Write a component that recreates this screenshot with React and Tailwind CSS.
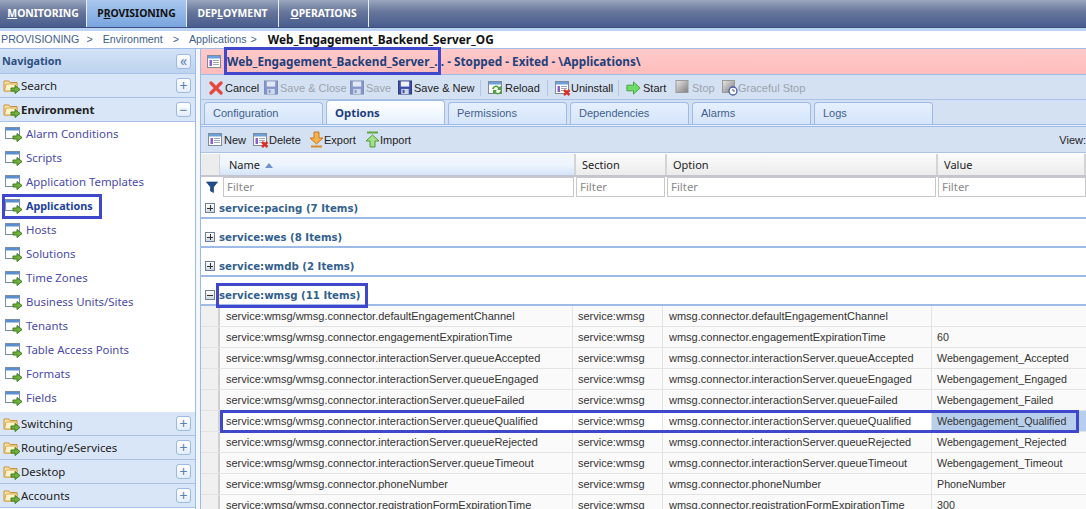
const FONT = "font-['Noto_Sans',sans-serif]";
const ARIAL = "font-['Liberation_Sans',sans-serif]";
const Fld = () => (
  <svg width="18" height="18" viewBox="0 0 18 18" className="shrink-0">
    <path d="M1 4h5l1 1.500h7V14H1z" fill="#fbe7a8" stroke="#c98f3c" />
    <path d="M3 7h11v7H1.500z" fill="#fdf3c9" stroke="#d6a350" />
    <path d="M8 11h4V8.500l5 4-5 4V14H8z" fill="#6fb03c" stroke="#3f7d1f" />
  </svg>
);
const Win = () => (
  <svg width="18" height="18" viewBox="0 0 18 18" className="shrink-0">
    <rect x="0.500" y="2.500" width="14" height="11" fill="#fff" stroke="#7a8ca8" />
    <rect x="1" y="3" width="13" height="2.500" fill="#5b8fd0" />
    <path d="M8 11h4V8.500l5 4-5 4V14H8z" fill="#6fb03c" stroke="#3f7d1f" />
  </svg>
);
const Doc = ({ x }) => (
  <svg width="16" height="16" viewBox="0 0 16 16" className="shrink-0">
    <rect x="0.500" y="1.500" width="13" height="12" fill="#fff" stroke="#7f8a99" />
    <rect x="1" y="2" width="12" height="2.500" fill="#6aa0dc" />
    <rect x="2.500" y="6" width="2.500" height="6" fill="#8a5fd0" />
    <path d="M6 6.500h6M6 8.500h6M6 10.500h6" stroke="#9aa7b8" />
    {x && <path d="M9 10l5.500 5M14.500 10L9 15" stroke="#d8302a" strokeWidth="2.400" />}
  </svg>
);
const Disk = ({ off }) => (
  <svg width="14" height="15" viewBox="0 0 15 15" className="shrink-0" opacity={off ? 0.5 : 1}>
    <rect x="0.500" y="0.500" width="14" height="14" fill="#3a4ea8" stroke="#27357a" />
    <rect x="3" y="1" width="9" height="5.500" fill="#eef2fa" />
    <rect x="3.500" y="9" width="8" height="5.500" fill="#cfd6e4" />
    <rect x="5" y="10" width="2" height="3.500" fill="#3a4ea8" />
  </svg>
);
const Cross = () => (
  <svg width="14" height="14" viewBox="0 0 14 14" className="shrink-0">
    <path d="M2 2l10 10M12 2L2 12" stroke="#e8453c" strokeWidth="3.200" strokeLinecap="round" />
  </svg>
);
const Reload = () => (
  <svg width="16" height="16" viewBox="0 0 16 16" className="shrink-0">
    <rect x="0.500" y="1.500" width="13" height="12" fill="#fff" stroke="#7f8a99" />
    <rect x="1" y="2" width="12" height="2.500" fill="#6aa0dc" />
    <path d="M4 9a4 4 0 0 1 7-2l2-1v4h-4l1-1a2 2 0 0 0-4 0z" fill="#4da23a" />
    <path d="M14 10a4 4 0 0 1-7 3l-2 1v-4h4l-1 1a2 2 0 0 0 4 0z" fill="#4da23a" />
  </svg>
);
const Right = () => (
  <svg width="15" height="14" viewBox="0 0 16 14" className="shrink-0">
    <path d="M1 4h7V0.500L15 7l-7 6.500V10H1z" fill="#6fdc6a" stroke="#3fa33c" />
  </svg>
);
const StopI = ({ clock }) => (
  <svg width={clock ? 17 : 14} height="17" viewBox={clock ? "0 0 17 17" : "0.500 0 14 17"} className="shrink-0">
    <defs>
      <linearGradient id="sg" x1="0" y1="0" x2="1" y2="1">
        <stop offset="0" stopColor="#e8e8e8" />
        <stop offset="1" stopColor="#7d7d7d" />
      </linearGradient>
    </defs>
    <rect x="1.500" y="1.500" width="12" height="12" fill="url(#sg)" stroke="#9a9a9a" />
    {clock && <circle cx="12" cy="12" r="4" fill="#fff" stroke="#4a5aa8" strokeWidth="1.300" />}
    {clock && <path d="M12 10v2h2" stroke="#4a5aa8" fill="none" />}
  </svg>
);
const ExportI = () => (
  <svg width="15" height="17" viewBox="0 0 15 17" className="shrink-0">
    <path d="M5 1h5v6h4l-6.500 6L1 7h4z" fill="#f6b24a" stroke="#c9761e" />
    <path d="M2 15.500h11" stroke="#d98a2c" strokeWidth="2" />
  </svg>
);
const ImportI = () => (
  <svg width="15" height="17" viewBox="0 0 15 17" className="shrink-0">
    <path d="M2 1.500h11" stroke="#5aa83c" strokeWidth="2" />
    <path d="M5 16h5v-6h4L7.500 4 1 10h4z" fill="#a4e08a" stroke="#4f9a34" />
  </svg>
);
const Funnel = () => (
  <svg width="12" height="12" viewBox="0 0 12 12">
    <path d="M0.500 1h11L7.500 6v5.500l-3-1.500V6z" fill="#1f4f8f" stroke="#0d2f5f" strokeWidth="0.600" />
  </svg>
);

const PM = ({ c }) => (
  <div className="w-[15px] h-[15px] rounded-[3px] border border-[#9db9e0] bg-gradient-to-b from-white to-[#e3edfb] flex items-center justify-center text-[#5a7fb5] text-[14px] leading-none">
    {c}
  </div>
);

const Section = ({ label, bold, sign }) => (
  <div className="h-[24px] shrink-0 flex items-center justify-between pl-[3px] pr-[4px] bg-[#d9e6f7] border-b border-[#a9c3e6] text-[#222] text-[11.400px]">
    <div className="flex items-center">
      <Fld />
      <span className={bold ? "font-bold" : ""}>{label}</span>
    </div>
    <PM c={sign} />
  </div>
);

const navItems = ["Alarm Conditions", "Scripts", "Application Templates", "Applications", "Hosts", "Solutions", "Time Zones", "Business Units/Sites", "Tenants", "Table Access Points", "Formats", "Fields"];

const rows = [
  ["defaultEngagementChannel", ""],
  ["engagementExpirationTime", "60"],
  ["interactionServer.queueAccepted", "Webengagement_Accepted"],
  ["interactionServer.queueEngaged", "Webengagement_Engaged"],
  ["interactionServer.queueFailed", "Webengagement_Failed"],
  ["interactionServer.queueQualified", "Webengagement_Qualified"],
  ["interactionServer.queueRejected", "Webengagement_Rejected"],
  ["interactionServer.queueTimeout", "Webengagement_Timeout"],
  ["phoneNumber", "PhoneNumber"],
  ["registrationFormExpirationTime", "300"],
];

const Top = ({ w, pre, u, post, active }) => (
  <div className={`h-full flex items-center justify-center border-r border-[#e8eef8] font-bold text-[10.400px] ${active ? "bg-gradient-to-b from-[#a9c8ef] to-[#78a4de] text-[#111]" : "bg-gradient-to-b from-[#9aa6bf] via-[#66759a] via-45% to-[#485c8e] text-white"} ${w}`}>
    <span>{pre}<u>{u}</u>{post}</span>
  </div>
);

const Tool = ({ icon, label, off, cls, gap }) => (
  <div className={`flex items-center text-[11px] ${ARIAL} ${off ? "text-[#9aa3ae]" : "text-[#222]"} ${gap || "gap-[2px]"} ${cls || ""}`}>
    {icon}
    <span className="pt-[1px]">{label}</span>
  </div>
);
const Sep = () => <div className="w-px h-[16px] bg-[#b4c8e4] mr-[7px]" />;

const Tab = ({ label, active }) => (
  <div className={`w-[119px] rounded-t-[4px] border border-b-0 border-[#9dbbe6] flex items-center pl-[8px] ${active ? `h-[24px] text-[11.400px] bg-gradient-to-b from-white to-[#e6f0fd] font-bold text-[#1c3f7c]` : `h-[22px] text-[11px] ${ARIAL} bg-gradient-to-b from-[#e6f0fd] to-[#d5e5fb] text-[#3f5f8c]`}`}>
    {label}
  </div>
);

const HeadCell = ({ w, label, active, arrow }) => (
  <div className={`h-full pt-[1px] flex items-center border-r-2 border-[#d4d4d4] text-[#222] text-[11px] gap-[5px] ${w} ${active ? "pl-[9px] bg-gradient-to-b from-[#f2f7fe] via-[#eef5fd] to-[#d4e4f8]" : "pl-[6px] bg-gradient-to-b from-[#fbfbfb] to-[#ececec]"}`}>
    {label}
    {arrow && <span className="w-0 h-0 border-x-[4px] border-x-transparent border-b-[5px] border-b-[#6f93c8]" />}
  </div>
);

const FilterCell = ({ w, last }) => (
  <div className={`h-full ${last ? "" : "pr-[2px]"} ${w}`}>
    <div className="h-full border border-[#c9c9c9] bg-white text-[#8a8a8a] text-[11.400px] pl-[3px] flex items-center">Filter</div>
  </div>
);

const Group = ({ label, open, first }) => (
  <div className={`${first ? "h-[22px]" : "h-[29px]"} shrink-0 border-b-2 border-[#9dbbe6] bg-white flex items-end pl-[4px] gap-[4px] box-border`}>
    <div className="w-[10px] h-[10px] mb-[4px] border border-[#6f7f94] bg-gradient-to-b from-white to-[#cfd8e4] flex items-center justify-center">
      <div className="relative w-[6px] h-px bg-[#333]">
        {!open && <div className="absolute left-[2.500px] -top-[2.500px] w-px h-[6px] bg-[#333]" />}
      </div>
    </div>
    <span className="font-bold text-[#335f8e] text-[10.200px] font-['DejaVu_Sans',sans-serif] mb-[1px]">{label}</span>
  </div>
);

const Box = ({ cls }) => <div className={`absolute border-[3px] border-[#3f48cc] pointer-events-none ${cls}`} />;

export default function App() {
  return (
    <div className={`relative w-[1086px] h-[509px] overflow-hidden bg-white flex flex-col ${FONT}`}>
      <div className="h-[28px] shrink-0 flex bg-gradient-to-b from-[#9aa6bf] via-[#66759a] via-45% to-[#485c8e] border-b border-[#3c4f80]">
        <Top w="w-[87px]" u="M" post="ONITORING" />
        <Top w="w-[100px]" pre="P" u="R" post="OVISIONING" active />
        <Top w="w-[92px]" pre="DEP" u="L" post="OYMENT" />
        <Top w="w-[90px]" u="O" post="PERATIONS" />
      </div>
      <div className="h-[3px] shrink-0 bg-[#bcd4f3]" />
      <div className={`h-[18px] shrink-0 flex items-center pl-[1px] text-[10.700px] ${ARIAL} text-[#3f5f8c] border-b border-[#a0bde8] whitespace-pre`}>
        <span>PROVISIONING</span>
        <span className="ml-[7px] mr-[10px]">&gt;</span>
        <span>Environment</span>
        <span className="ml-[10px] mr-[10px]">&gt;</span>
        <span>Applications</span>
        <span className="ml-[4px] mr-[11px]">&gt;</span>
        <span className={`font-bold text-[#111] text-[11.800px] ${FONT}`}>Web_Engagement_Backend_Server_OG</span>
      </div>
      <div className="flex-1 flex min-h-0">
        <div className="w-[196px] shrink-0 border-r border-[#9dbbe6] flex flex-col overflow-hidden">
          <div className="h-[25px] shrink-0 flex items-center justify-between pl-[2px] pr-[4px] bg-gradient-to-b from-[#d3e2f6] to-[#bdd3ef] border-b border-[#a9c3e6]">
            <span className="font-bold text-[10.800px] text-[#2b4f80]">Navigation</span>
            <PM c="«" />
          </div>
          <Section label="Search" sign="+" />
          <Section label="Environment" bold sign="−" />
          <div className="flex-1 flex flex-col">
            {navItems.map((n) => (
              <div key={n} className={`h-[24px] shrink-0 flex items-center pl-[5px] gap-[3px] ${n === "Applications" ? "text-[10.800px] font-bold text-[#1c3f9c]" : "text-[11.400px] text-[#4a4aa8]"}`}>
                <Win />
                <span>{n}</span>
              </div>
            ))}
          </div>
          <Section label="Switching" sign="+" />
          <Section label="Routing/eServices" sign="+" />
          <Section label="Desktop" sign="+" />
          <Section label="Accounts" sign="+" />
          <div className="h-[1px] shrink-0" />
        </div>
        <div className="w-[4px] shrink-0 bg-[#f4f7fc]" />
        <div className="flex-1 flex flex-col min-w-0 border-l border-[#9dbbe6] bg-white">
          <div className="h-[26px] shrink-0 flex items-center pl-[6px] gap-[4px] bg-gradient-to-b from-[#ffc9c9] to-[#ffbcbc] border-b border-[#9dbbe6] font-bold text-[11.750px] text-[#20407c] whitespace-pre">
            <Doc />
            <span>Web_Engagement_Backend_Server_... - Stopped - Exited - \Applications\</span>
          </div>
          <div className="h-[25px] shrink-0 flex items-center pl-[8px] pt-[1px] bg-[#d4e1f2] border-b border-[#a9c3e6]">
            <Tool icon={<Cross />} label="Cancel" cls="w-[55px]" />
            <Tool icon={<Disk off />} label="Save & Close" off cls="w-[86px]" />
            <Tool icon={<Disk off />} label="Save" off cls="w-[48px]" />
            <Tool icon={<Disk />} label="Save & New" cls="w-[82px]" />
            <Sep />
            <Tool icon={<Reload />} label="Reload" gap="gap-[1px]" cls="w-[59px]" />
            <Sep />
            <Tool icon={<Doc x />} label="Uninstall" gap="gap-[0px]" cls="w-[63px]" />
            <Sep />
            <Tool icon={<Right />} label="Start" gap="gap-[2px]" cls="w-[49px]" />
            <Tool icon={<StopI />} label="Stop" off gap="gap-[3px]" cls="w-[46px]" />
            <Tool icon={<StopI clock />} label="Graceful Stop" off gap="gap-[0px]" />
          </div>
          <div className="h-[24px] shrink-0 flex items-end gap-[3px] pl-[3px] bg-[#d4e1f2]">
            <Tab label="Configuration" />
            <Tab label="Options" active />
            <Tab label="Permissions" />
            <Tab label="Dependencies" />
            <Tab label="Alarms" />
            <Tab label="Logs" />
          </div>
          <div className="h-[3px] shrink-0 bg-[#e6f0fd] border-y border-[#9dbbe6]" />
          <div className="h-[26px] shrink-0 flex items-center pl-[7px] justify-between bg-[#d4e1f2] border-b border-[#a9c3e6]">
            <div className="flex items-center">
              <Tool icon={<Doc />} label="New" gap="gap-[0px]" cls="w-[45px]" />
              <Tool icon={<Doc x />} label="Delete" gap="gap-[0px]" cls="w-[56px]" />
              <Tool icon={<ExportI />} label="Export" gap="gap-[0px]" cls="w-[56px]" />
              <Tool icon={<ImportI />} label="Import" gap="gap-[0px]" />
            </div>
            <span className={`text-[11px] pt-[1px] ${ARIAL} text-[#222]`}>View:</span>
          </div>
          <div className="h-[1px] shrink-0" />
          <div className="h-[23px] shrink-0 flex border-b-2 border-[#c5c5d2]">
            <div className="w-[19px] shrink-0 bg-[#ececec] border-r border-[#d4d4d4]" />
            <HeadCell w="w-[356px]" label="Name" active arrow />
            <HeadCell w="w-[91px]" label="Section" />
            <HeadCell w="w-[271px]" label="Option" />
            <HeadCell w="flex-1" label="Value" />
          </div>
          <div className="h-[20px] shrink-0 flex items-center">
            <div className="w-[22px] shrink-0 flex justify-center">
              <Funnel />
            </div>
            <FilterCell w="w-[353px]" />
            <FilterCell w="w-[91px]" />
            <FilterCell w="w-[271px]" />
            <FilterCell w="flex-1" last />
          </div>
          <Group label="service:pacing (7 Items)" first />
          <Group label="service:wes (8 Items)" />
          <Group label="service:wmdb (2 Items)" />
          <Group label="service:wmsg (11 Items)" open />
          <div className={`flex flex-col ${ARIAL} text-[11px] text-[#333]`}>
            {rows.map(([k, v]) => {
              const sel = k.endsWith("Qualified");
              return (
                <div key={k} className={`h-[21px] shrink-0 flex items-center border-b border-[#e3e3e3] ${sel ? "bg-white" : "bg-[#fafafa]"}`}>
                  <div className="w-[19px] h-full shrink-0 bg-[#f0f0f0] border-r-2 border-[#d0d0d0]" />
                  <div className="w-[353px] shrink-0 pl-[6px] h-full flex items-center border-r border-[#e3e3e3] whitespace-nowrap">service:wmsg/wmsg.connector.{k}</div>
                  <div className="w-[90px] shrink-0 pl-[5px] h-full flex items-center border-r border-[#e3e3e3]">service:wmsg</div>
                  <div className="w-[269px] shrink-0 pl-[6px] h-full flex items-center border-r border-[#e3e3e3] whitespace-nowrap">wmsg.connector.{k}</div>
                  <div className={`flex-1 pl-[5px] h-full flex items-center text-[10.700px] ${sel ? "bg-[#b8cfeb]" : ""}`}>{v}</div>
                </div>
              );
            })}
          </div>
        </div>
      </div>
      <Box cls="left-[2px] top-[194px] w-[100px] h-[25px]" />
      <Box cls="left-[224px] top-[47px] w-[217px] h-[28px]" />
      <Box cls="left-[216px] top-[283px] w-[152px] h-[25px]" />
      <Box cls="left-[220px] top-[410px] w-[859px] h-[23px]" />
    </div>
  );
}
